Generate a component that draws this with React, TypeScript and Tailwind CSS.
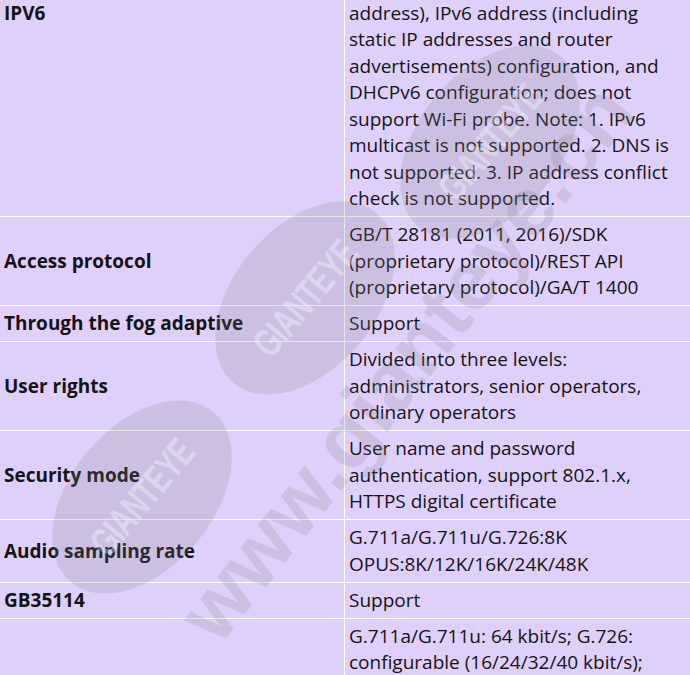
const rows: { label: string; value: string[]; first?: boolean }[] = [
  {
    label: 'IPV6',
    first: true,
    value: [
      'address), IPv6 address (including',
      'static IP addresses and router',
      'advertisements) configuration, and',
      'DHCPv6 configuration; does not',
      'support Wi-Fi probe. Note: 1. IPv6',
      'multicast is not supported. 2. DNS is',
      'not supported. 3. IP address conflict',
      'check is not supported.',
    ],
  },
  {
    label: 'Access protocol',
    value: ['GB/T 28181 (2011, 2016)/SDK', '(proprietary protocol)/REST API', '(proprietary protocol)/GA/T 1400'],
  },
  { label: 'Through the fog adaptive', value: ['Support'] },
  { label: 'User rights', value: ['Divided into three levels:', 'administrators, senior operators,', 'ordinary operators'] },
  {
    label: 'Security mode',
    value: ['User name and password', 'authentication, support 802.1.x,', 'HTTPS digital certificate'],
  },
  { label: 'Audio sampling rate', value: ['G.711a/G.711u/G.726:8K', 'OPUS:8K/12K/16K/24K/48K'] },
  { label: 'GB35114', value: ['Support'] },
  { label: '', value: ['G.711a/G.711u: 64 kbit/s; G.726:', 'configurable (16/24/32/40 kbit/s);', 'G.722.1: 16 kbit/s; OPUS: 16 kbit/s'] },
];

function Stamp({ className }: { className: string }) {
  return (
    <div className={`absolute w-[142px] h-[222px] rounded-[50%] bg-[#808080]/20 rotate-[40deg] flex items-center justify-center ${className}`}>
      <span className="-rotate-90 text-[40px] font-bold tracking-tight text-white/35 scale-x-[0.7] font-['Liberation_Sans_Narrow','Liberation_Sans',sans-serif]">
        GIANTEYE
      </span>
    </div>
  );
}

export default function App() {
  return (
    <div className="relative h-[675px] w-[690px] overflow-hidden bg-[#dfcffb] text-[19px] leading-[26.5px] text-[#141414] font-['Open_Sans','Noto_Sans',sans-serif]">
      <div className="-mt-[4.5px] flex flex-col">
        {rows.map((r, i) => (
          <div key={i} className="grid grid-cols-[345px_1fr] border-b border-white">
            <div className={`px-1 py-[4.25px] font-bold border-r border-white flex ${r.first ? 'items-start' : 'items-center'}`}>
              {r.label}
            </div>
            <div className="px-1 py-[4.25px]">
              {r.value.map((line, j) => (
                <div key={j} className="whitespace-nowrap">{line}</div>
              ))}
            </div>
          </div>
        ))}
      </div>

      {/* watermark */}
      <div className="pointer-events-none absolute inset-0">
        <Stamp className="left-[419px] top-[31px]" />
        <Stamp className="left-[234px] top-[187px]" />
        <Stamp className="left-[71px] top-[386px]" />
        <div className="absolute left-[405px] top-[362px] -translate-x-1/2 -translate-y-1/2 -rotate-[52deg] whitespace-nowrap text-[84px] font-bold leading-none text-[#808080]/20 font-['Liberation_Sans',sans-serif]">
          www.gianteye.cn
        </div>
      </div>
    </div>
  );
}
